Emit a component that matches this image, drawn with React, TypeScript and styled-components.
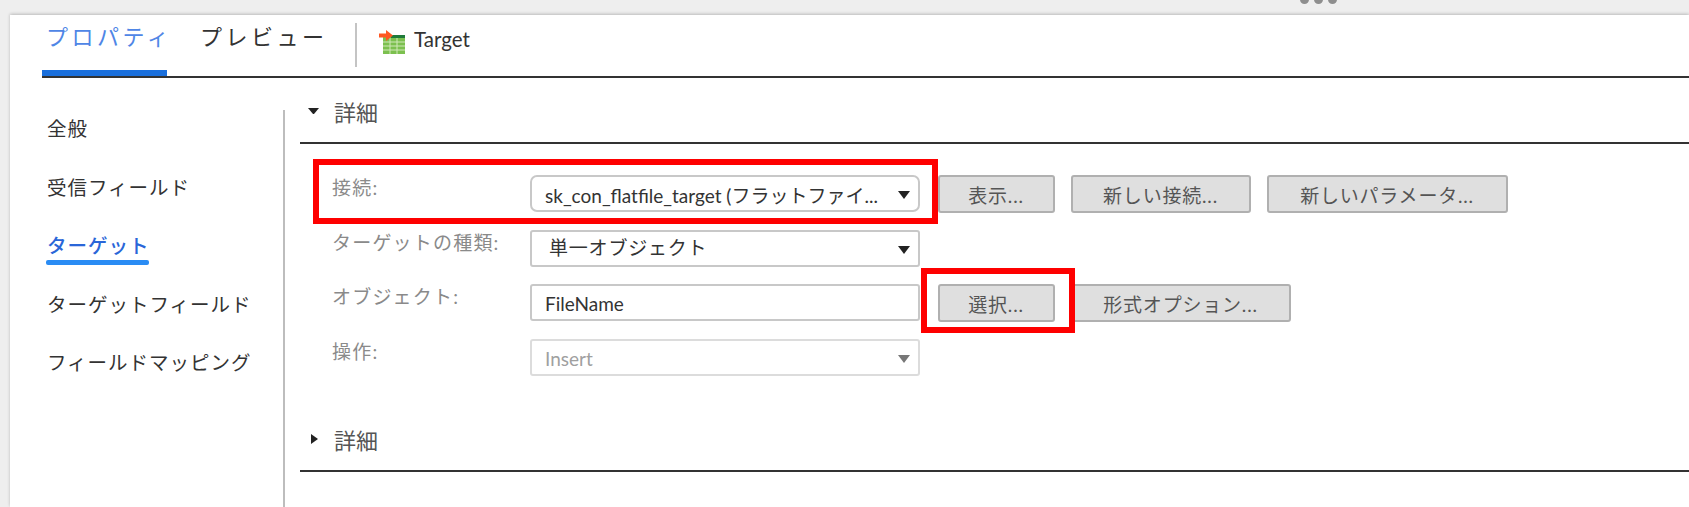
import React from 'react'
import styled, { createGlobalStyle } from 'styled-components'

const GlobalStyle = createGlobalStyle`
    html, body {
        margin: 0;
        padding: 0;
        background: #eeeeee;
    }

    * {
        box-sizing: border-box;
    }

    body {
        font-family: Lato, "Noto Sans CJK JP", sans-serif;
        color: #333;
    }
`

const Page = styled.div`
    position: relative;
    height: 507px;
    padding: 15px 0 0 10px;
    overflow: hidden;
`

const Grip = styled.div`
    position: absolute;
    top: -5px;
    left: 1300px;
    display: flex;
    gap: 5px;

    i {
        display: block;
        width: 9px;
        height: 9px;
        border-radius: 50%;
        background: #8e8e8e;
    }
`

const Panel = styled.div`
    height: 492px;
    background: #fff;
    box-shadow: 0 -1px 3px rgba(0, 0, 0, .22);
`

const TabBar = styled.div`
    display: flex;
    height: 63px;
    margin-left: 32px;
    border-bottom: 2px solid #333;
`

const Tab = styled.div<{ $active?: boolean }>`
    width: ${p => (p.$active ? '125px' : '127px')};
    margin-left: ${p => (p.$active ? '0' : '33px')};
    padding: 8px 0 0 ${p => (p.$active ? '4px' : '0')};
    font-size: 22px;
    line-height: 28px;
    letter-spacing: 3.5px;
    white-space: nowrap;
    text-align: ${p => (p.$active ? 'center' : 'left')};
    color: ${p => (p.$active ? '#4f86e6' : '#333')};
    border-bottom: 6px solid ${p => (p.$active ? '#1a6fdc' : 'transparent')};
`

const TabDivider = styled.div`
    width: 2px;
    height: 44px;
    margin: 8px 22px 0 28px;
    background: #c4c4c4;
`

const TabIcon = styled.svg`
    width: 26px;
    height: 24px;
    margin: 15px 9px 0 0;
`

const TabTarget = styled.div`
    padding-top: 10px;
    font-size: 20.5px;
    line-height: 28px;
`

const Body = styled.div`
    display: flex;
    height: 429px;
    padding: 10px 0 0 32px;
`

const Sidebar = styled.nav`
    display: flex;
    flex-direction: column;
    gap: 22.5px;
    width: 242.5px;
    height: 397px;
    margin-top: 22px;
    padding-top: 1px;
    border-right: 2px solid #bdbdbd;
`

const NavItem = styled.div<{ $active?: boolean }>`
    position: relative;
    align-self: flex-start;
    height: 36px;
    margin-left: 5px;
    font-size: 19.5px;
    line-height: 36px;
    letter-spacing: 1px;
    font-weight: ${p => (p.$active ? 500 : 400)};
    color: ${p => (p.$active ? '#2a66d8' : '#333')};

    ${p => p.$active && `
        &::after {
            content: "";
            position: absolute;
            left: -1px;
            right: 1px;
            bottom: -1px;
            height: 5px;
            border-radius: 2px;
            background: #2a8cf4;
        }
    `}
`

const Main = styled.main`
    flex: 1;
    padding-left: 15.5px;
`

const SectionHeader = styled.div<{ $spaced?: boolean }>`
    display: flex;
    align-items: center;
    height: 56px;
    margin-top: ${p => (p.$spaced ? '40px' : '0')};
    padding-bottom: 9px;
    border-bottom: 2px solid #333;
`

const Caret = styled.span<{ $open?: boolean }>`
    height: 0;
    ${p => p.$open
        ? `border-left: 5.5px solid transparent;
           border-right: 5.5px solid transparent;
           border-top: 6px solid #222;
           width: 11px;
           margin: 0 15px 0 8px;`
        : `border-top: 5.5px solid transparent;
           border-bottom: 5.5px solid transparent;
           border-left: 7px solid #222;
           width: 7px;
           margin: 0 16px 0 11px;`}
`

const SectionTitle = styled.span`
    font-size: 22px;
    color: #555;
`

const Form = styled.div`
    display: flex;
    flex-direction: column;
    gap: 17.7px;
    margin-top: 31px;
    padding-left: 32px;
`

const Row = styled.div`
    display: flex;
    height: 37px;
`

const Label = styled.div`
    width: 198px;
    padding-top: 2px;
    font-size: 19px;
    line-height: 22px;
    letter-spacing: 1.2px;
    color: #8a8a8a;
`

const Control = styled.div<{ $disabled?: boolean; $round?: boolean; $raised?: boolean }>`
    position: relative;
    display: flex;
    align-items: center;
    width: 390px;
    height: 37px;
    padding: ${p => (p.$raised ? '0 0 3px 17px' : '2px 0 0 13px')};
    font-size: 19px;
    letter-spacing: ${p => (p.$raised ? '.8px' : '0')};
    white-space: nowrap;
    overflow: hidden;
    background: #fff;
    color: ${p => (p.$disabled ? '#a0a0a0' : '#333')};
    border: 2px solid ${p => (p.$disabled ? '#dcdcdc' : '#c8c8c8')};
    border-radius: ${p => (p.$round ? '7px' : '3px')};
`

const SelectArrow = styled.span<{ $disabled?: boolean }>`
    position: absolute;
    right: 8px;
    top: 14px;
    border-left: 6px solid transparent;
    border-right: 6px solid transparent;
    border-top: 8px solid ${p => (p.$disabled ? '#777' : '#222')};
`

const ButtonGroup = styled.div`
    display: flex;
    gap: 16px;
    margin-left: 17.5px;
`

const Button = styled.button<{ $width: number }>`
    width: ${p => p.$width}px;
    height: 38px;
    padding: 0;
    font-family: inherit;
    font-size: 19px;
    letter-spacing: .8px;
    color: #555;
    background: #dfdfdf;
    border: 2px solid #b0b0b0;
    border-radius: 3px;
`

const Highlight = styled.div<{ $x: number; $y: number; $w: number; $h: number }>`
    position: absolute;
    left: ${p => p.$x}px;
    top: ${p => p.$y}px;
    width: ${p => p.$w}px;
    height: ${p => p.$h}px;
    border: 6px solid #fe0000;
    pointer-events: none;
`

const navItems = ['全般', '受信フィールド', 'ターゲット', 'ターゲットフィールド', 'フィールドマッピング']

export default function App() {
    return (
        <Page>
            <GlobalStyle />
            <Grip><i /><i /><i /></Grip>
            <Panel>
                <TabBar>
                    <Tab $active>プロパティ</Tab>
                    <Tab>プレビュー</Tab>
                    <TabDivider />
                    <TabIcon viewBox="0 0 26 24">
                        <rect x="4" y="5" width="22" height="19" fill="#7cc04f" />
                        <rect x="12" y="5" width="14" height="3" fill="#1f7a3a" />
                        <path d="M4 12h22M4 16h22M4 20h22M11 8v16M18 8v16" stroke="#cfe8b8" strokeWidth="1" />
                        <path d="M0 3.5h7V0l7 5.5-7 5.5V7.5H0z" fill="#ff5722" />
                    </TabIcon>
                    <TabTarget>Target</TabTarget>
                </TabBar>
                <Body>
                    <Sidebar>
                        {navItems.map(item => (
                            <NavItem key={item} $active={item === 'ターゲット'}>{item}</NavItem>
                        ))}
                    </Sidebar>
                    <Main>
                        <SectionHeader>
                            <Caret $open />
                            <SectionTitle>詳細</SectionTitle>
                        </SectionHeader>
                        <Form>
                            <Row>
                                <Label>接続:</Label>
                                <Control $round>
                                    sk_con_flatfile_target (フラットファイ...
                                    <SelectArrow />
                                </Control>
                                <ButtonGroup>
                                    <Button $width={117}>表示...</Button>
                                    <Button $width={180}>新しい接続...</Button>
                                    <Button $width={241}>新しいパラメータ...</Button>
                                </ButtonGroup>
                            </Row>
                            <Row>
                                <Label>ターゲットの種類:</Label>
                                <Control $raised>
                                    単一オブジェクト
                                    <SelectArrow />
                                </Control>
                            </Row>
                            <Row>
                                <Label>オブジェクト:</Label>
                                <Control>FileName</Control>
                                <ButtonGroup>
                                    <Button $width={117}>選択...</Button>
                                    <Button $width={220}>形式オプション...</Button>
                                </ButtonGroup>
                            </Row>
                            <Row>
                                <Label>操作:</Label>
                                <Control $disabled>
                                    Insert
                                    <SelectArrow $disabled />
                                </Control>
                            </Row>
                        </Form>
                        <SectionHeader $spaced>
                            <Caret />
                            <SectionTitle>詳細</SectionTitle>
                        </SectionHeader>
                    </Main>
                </Body>
            </Panel>
            <Highlight $x={313} $y={159} $w={625} $h={65} />
            <Highlight $x={921} $y={268} $w={154} $h={65} />
        </Page>
    )
}
